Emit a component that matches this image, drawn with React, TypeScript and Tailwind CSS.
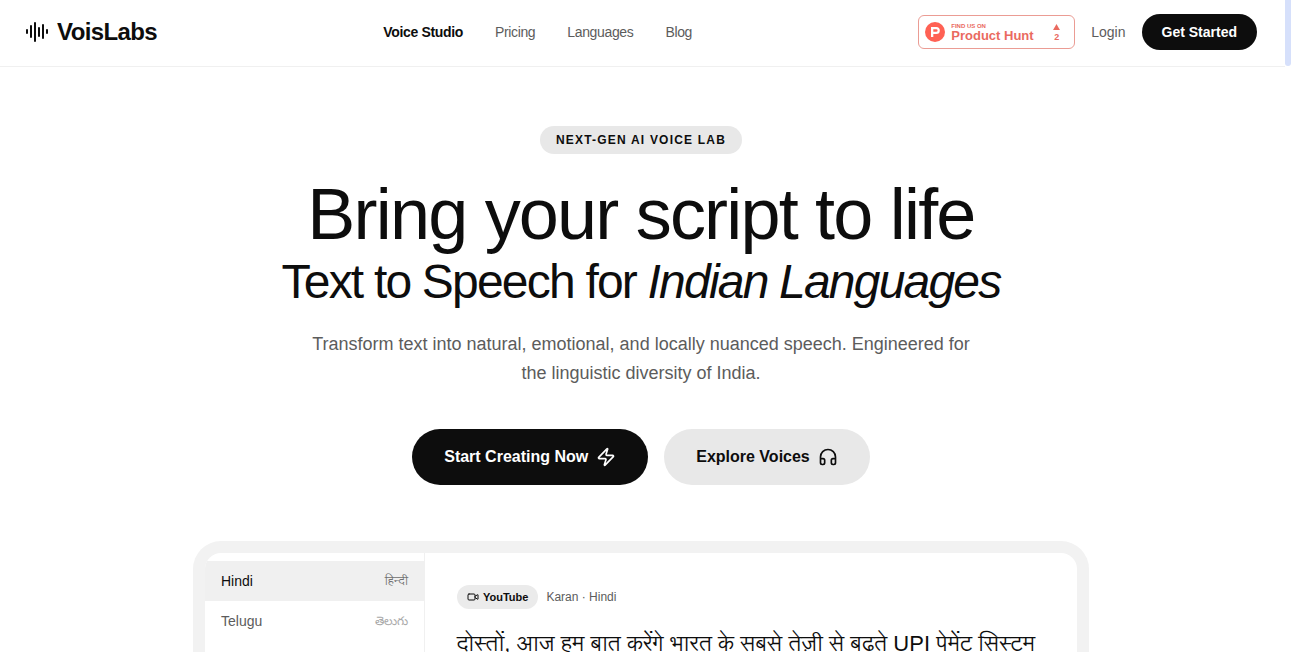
import React from 'react';
import { Headphones, Video, Zap } from 'lucide-react';

const navLinks = ['Voice Studio', 'Pricing', 'Languages', 'Blog'];

const languages = [
  { name: 'Hindi', native: 'हिन्दी', code: 'hi' },
  { name: 'Telugu', native: 'తెలుగు', code: 'te' },
];

const Logo = () => (
  <a href="#" className="flex items-center gap-[9px] text-2xl font-bold tracking-tight">
    <svg
      viewBox="0 0 24 24"
      className="h-6 w-6"
      fill="none"
      stroke="currentColor"
      strokeWidth="2"
      strokeLinecap="round"
      aria-hidden="true"
    >
      <path d="M3 10v3M7 6v11M11 3v18M15 8v8M19 5v13M23 10v3" />
    </svg>
    VoisLabs
  </a>
);

const ProductHuntBadge = () => (
  <a
    href="#"
    className="flex h-[34px] w-[157px] items-center rounded-md border border-[#eb9c94] pr-3 pl-1.5 font-bold text-[#ea6a5f]"
  >
    <span className="flex h-5 w-5 items-center justify-center rounded-full bg-[#ff6154]">
      <svg viewBox="0 0 20 20" className="h-5 w-5" aria-hidden="true">
        <path
          fill="#fff"
          fillRule="evenodd"
          d="M6 5h5.3a3.5 3.5 0 0 1 0 7H8.3v3H6zM8.3 7.2v2.6h3a1.3 1.3 0 0 0 0-2.6z"
        />
      </svg>
    </span>
    <span className="ml-1.5 flex flex-col pt-0.5">
      <span className="text-[6px] leading-[6px]">FIND US ON</span>
      <span className="text-[13px] leading-[13px]">Product Hunt</span>
    </span>
    <span className="mr-0.5 ml-auto flex flex-col items-center gap-0.5 pt-0.5 text-[9px] leading-[10px]">
      <svg viewBox="0 0 8 7" className="h-1.5 w-[7px]" aria-hidden="true">
        <path fill="currentColor" d="M4 0l4 7H0z" />
      </svg>
      2
    </span>
  </a>
);

const Header = () => (
  <header className="flex h-[67px] items-center justify-between border-b border-[#f0f0f0] pr-[25px] pb-[3px] pl-6">
    <Logo />
    <nav className="flex gap-8 text-sm tracking-tight text-[#5c5c5c]">
      {navLinks.map((link, idx) => (
        <a key={link} href="#" className={idx === 0 ? 'font-bold text-[#0d0d0d]' : ''}>
          {link}
        </a>
      ))}
    </nav>
    <div className="flex items-center gap-4 text-sm">
      <ProductHuntBadge />
      <a href="#" className="text-[#5c5c5c]">
        Login
      </a>
      <button className="h-9 rounded-full bg-[#0d0d0d] px-5 font-bold text-white">Get Started</button>
    </div>
  </header>
);

const Hero = () => (
  <section className="flex flex-col items-center px-6 pt-[59px] text-center">
    <span className="rounded-full bg-[#e8e8e8] px-4 py-1.5 text-xs font-bold tracking-widest">
      NEXT-GEN AI VOICE LAB
    </span>
    <h1 className="mt-6 text-7xl leading-[72px] tracking-tight">
      Bring your script to life
      <span className="block text-5xl leading-[64px]">
        Text to Speech for <em>Indian Languages</em>
      </span>
    </h1>
    <p className="mt-4 max-w-2xl text-lg leading-[29px] text-[#5c5c5c]">
      Transform text into natural, emotional, and locally nuanced speech. Engineered for the
      linguistic diversity of India.
    </p>
    <div className="mt-[41px] flex gap-4 font-bold">
      <button className="flex h-14 items-center gap-2 rounded-full bg-[#0d0d0d] px-8 text-white">
        Start Creating Now
        <Zap className="h-5 w-5" />
      </button>
      <button className="flex h-14 items-center gap-2 rounded-full bg-[#e8e8e8] px-8">
        Explore Voices
        <Headphones className="h-5 w-5" />
      </button>
    </div>
  </section>
);

const StudioPreview = () => (
  <section className="mx-auto mt-14 w-full max-w-4xl rounded-[28px] bg-[#f2f2f2] p-3">
    <div className="flex overflow-hidden rounded-2xl bg-white">
      {/* Language list */}
      <ul className="w-[220px] border-r border-[#f0f0f0] py-2 text-sm">
        {languages.map((lang, idx) => (
          <li key={lang.code}>
            <button
              className={`flex h-10 w-full items-center justify-between px-4 ${
                idx === 0 ? 'bg-[#f0f0f0]' : 'text-[#5c5c5c]'
              }`}
            >
              {lang.name}
              <span
                className={`font-['Liberation_Sans','Lohit_Devanagari','Lohit_Telugu','Noto_Sans',sans-serif] text-xs ${
                  idx === 0 ? 'text-[#707070]' : 'text-[#a8a8a8]'
                }`}
              >
                {lang.native}
              </span>
            </button>
          </li>
        ))}
      </ul>

      {/* Script */}
      <div className="flex-1 p-8">
        <div className="flex items-center gap-2 text-xs text-[#5c5c5c]">
          <span className="flex h-6 items-center gap-1 rounded-full bg-[#ebebeb] px-2.5 text-[11px] font-bold text-[#0d0d0d]">
            <Video className="h-3 w-3" />
            YouTube
          </span>
          Karan · Hindi
        </div>
        <p className="mt-4 font-['Liberation_Sans','Lohit_Devanagari','Noto_Sans',sans-serif] text-[22px] leading-[38px] font-light">
          दोस्तों, आज हम बात करेंगे भारत के सबसे तेज़ी से बढ़ते UPI पेमेंट सिस्टम
        </p>
      </div>
    </div>
  </section>
);

const App = () => {
  return (
    <div className="flex h-screen overflow-hidden bg-white font-['Liberation_Sans',sans-serif] text-[#0d0d0d]">
      <div className="min-w-0 flex-1">
        <Header />
        <main>
          <Hero />
          <StudioPreview />
        </main>
      </div>

      {/* Scroll indicator */}
      <div className="flex w-[9px] items-start">
        <div className="h-[67px] w-[3px] border-b border-[#f0f0f0]" />
        <div className="h-[66px] w-1.5 rounded-b-sm bg-[#d6e0fb]" />
      </div>
    </div>
  );
};

export default App;
